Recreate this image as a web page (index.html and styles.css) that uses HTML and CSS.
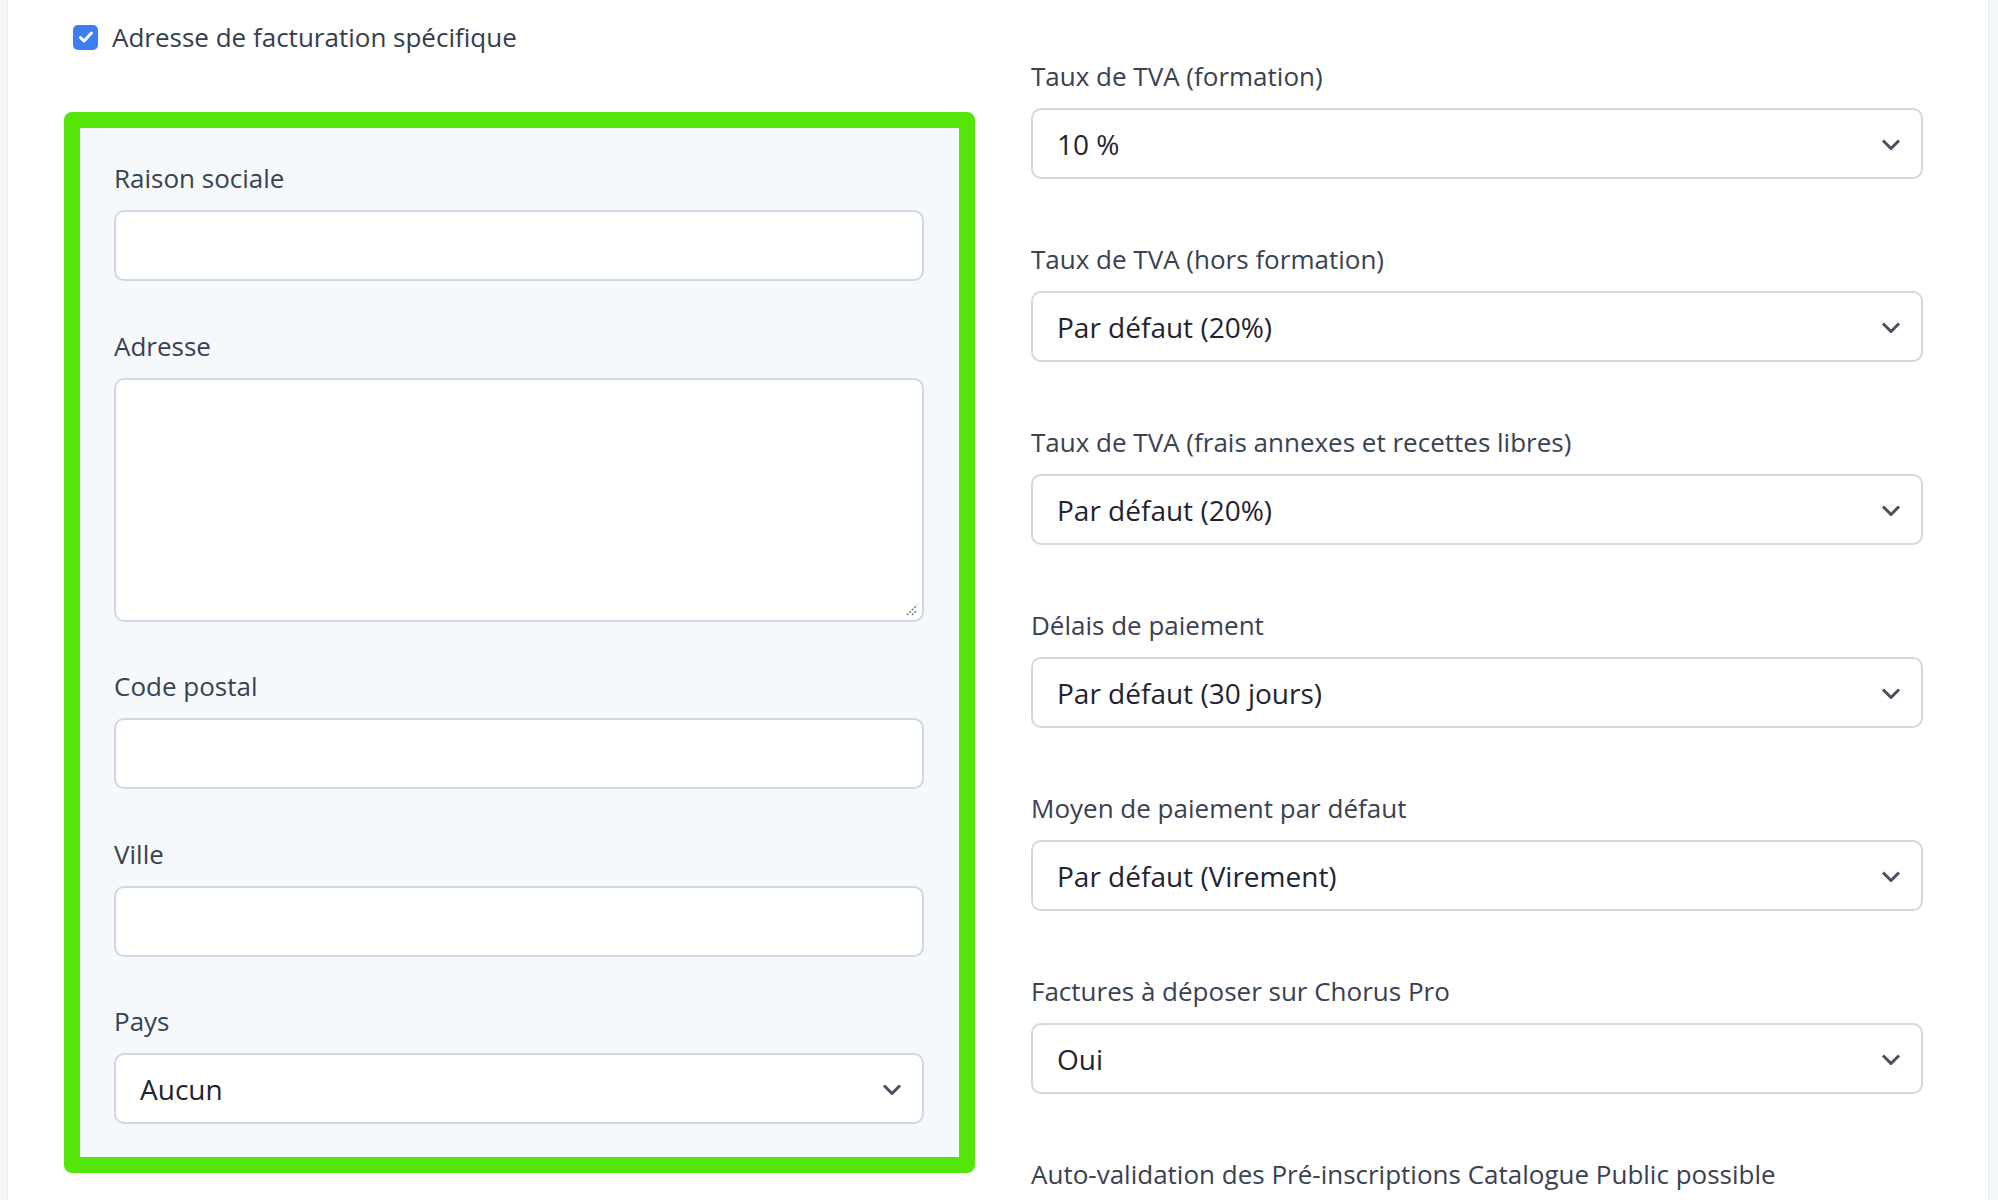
FILE: index.html
```html
<!DOCTYPE html>
<html lang="fr">
<head>
<meta charset="utf-8">
<title>Facturation</title>
<link rel="stylesheet" href="styles.css">
</head>
<body>
<div class="page">
  <aside class="edge edge-left"></aside>
  <main class="content">
    <section class="col col-left">
      <label class="check-row">
        <span class="checkbox"><svg width="18" height="18" viewBox="0 0 18 18"><path d="M3.5 9.5l3.5 3.5 7.5-8" fill="none" stroke="#fff" stroke-width="3" stroke-linecap="round" stroke-linejoin="round"/></svg></span>
        <span class="check-text">Adresse de facturation spécifique</span>
      </label>
      <div class="billing-box">
        <div class="field">
          <div class="lbl">Raison sociale</div>
          <div class="input"></div>
        </div>
        <div class="field">
          <div class="lbl">Adresse</div>
          <div class="input textarea"><svg class="grip" width="14" height="14" viewBox="0 0 14 14"><path d="M2 12L12 2M7 12l5-5" stroke="#777" stroke-width="1.5" stroke-dasharray="2 1.4" fill="none"/></svg></div>
        </div>
        <div class="field">
          <div class="lbl">Code postal</div>
          <div class="input"></div>
        </div>
        <div class="field">
          <div class="lbl">Ville</div>
          <div class="input"></div>
        </div>
        <div class="field">
          <div class="lbl">Pays</div>
          <div class="input select"><span class="val">Aucun</span><svg class="chev" width="20" height="12" viewBox="0 0 20 12"><path d="M2 2.5l8 8 8-8" fill="none" stroke="#4a5060" stroke-width="3"/></svg></div>
        </div>
      </div>
    </section>
    <section class="col col-right">
      <div class="field rfield">
        <div class="lbl">Taux de TVA (formation)</div>
        <div class="input select"><span class="val">10 %</span><svg class="chev" width="20" height="12" viewBox="0 0 20 12"><path d="M2 2.5l8 8 8-8" fill="none" stroke="#4a5060" stroke-width="3"/></svg></div>
      </div>
      <div class="field rfield">
        <div class="lbl">Taux de TVA (hors formation)</div>
        <div class="input select"><span class="val">Par défaut (20%)</span><svg class="chev" width="20" height="12" viewBox="0 0 20 12"><path d="M2 2.5l8 8 8-8" fill="none" stroke="#4a5060" stroke-width="3"/></svg></div>
      </div>
      <div class="field rfield">
        <div class="lbl">Taux de TVA (frais annexes et recettes libres)</div>
        <div class="input select"><span class="val">Par défaut (20%)</span><svg class="chev" width="20" height="12" viewBox="0 0 20 12"><path d="M2 2.5l8 8 8-8" fill="none" stroke="#4a5060" stroke-width="3"/></svg></div>
      </div>
      <div class="field rfield">
        <div class="lbl">Délais de paiement</div>
        <div class="input select"><span class="val">Par défaut (30 jours)</span><svg class="chev" width="20" height="12" viewBox="0 0 20 12"><path d="M2 2.5l8 8 8-8" fill="none" stroke="#4a5060" stroke-width="3"/></svg></div>
      </div>
      <div class="field rfield">
        <div class="lbl">Moyen de paiement par défaut</div>
        <div class="input select"><span class="val">Par défaut (Virement)</span><svg class="chev" width="20" height="12" viewBox="0 0 20 12"><path d="M2 2.5l8 8 8-8" fill="none" stroke="#4a5060" stroke-width="3"/></svg></div>
      </div>
      <div class="field rfield">
        <div class="lbl">Factures à déposer sur Chorus Pro</div>
        <div class="input select"><span class="val">Oui</span><svg class="chev" width="20" height="12" viewBox="0 0 20 12"><path d="M2 2.5l8 8 8-8" fill="none" stroke="#4a5060" stroke-width="3"/></svg></div>
      </div>
      <div class="field rfield">
        <div class="lbl">Auto-validation des Pré-inscriptions Catalogue Public possible</div>
      </div>
    </section>
  </main>
  <aside class="edge edge-right"></aside>
</div>
</body>
</html>
```
FILE: styles.css
```css
* { box-sizing: border-box; }
html, body {
  margin: 0;
  padding: 0;
  height: 1200px;
  overflow: hidden;
  background: #ffffff;
  font-family: "Open Sans", "Noto Sans", sans-serif;
  color: #394150;
}
.page {
  display: flex;
  height: 1200px;
}
.edge {
  flex: none;
  background: #f4f7fa;
}
.edge-left {
  width: 8px;
  border-right: 1px solid #e6ebf0;
}
.edge-right {
  width: 10px;
  border-left: 1px solid #e6ebf0;
}
.content {
  flex: 1;
  display: grid;
  grid-template-columns: 911px 892px;
  column-gap: 56px;
  align-items: start;
  padding: 19px 65px 0 56px;
}
.check-row {
  display: flex;
  align-items: center;
  height: 36px;
  padding-left: 9px;
  gap: 14px;
  font-size: 26px;
  color: #363d4b;
}
.checkbox {
  width: 25px;
  height: 25px;
  border-radius: 5px;
  background: #3c7ef0;
  display: flex;
  align-items: center;
  justify-content: center;
}
.billing-box {
  margin-top: 57px;
  border: 16px solid #54e60a;
  border-radius: 8px;
  background: #f6f9fb;
  padding: 32px 35px 33px 34px;
}
.field {
  display: flex;
  flex-direction: column;
  gap: 14px;
}
.field + .field {
  margin-top: 46.5px;
}
.lbl {
  font-size: 26px;
  line-height: 36px;
  height: 36px;
  color: #3a4150;
  white-space: nowrap;
}
.input {
  height: 71px;
  background: #ffffff;
  border: 2px solid #d0d8e2;
  border-radius: 10px;
}
.textarea {
  height: 244px;
  display: flex;
  align-items: flex-end;
  justify-content: flex-end;
  padding: 0 3px 3px 0;
}
.select {
  display: flex;
  align-items: center;
  justify-content: space-between;
  padding: 0 20px 0 24px;
  font-size: 28px;
  color: #1f2430;
}
.col-right {
  padding-top: 39px;
}
.col-right .rfield + .rfield {
  margin-top: 62px;
}
```
